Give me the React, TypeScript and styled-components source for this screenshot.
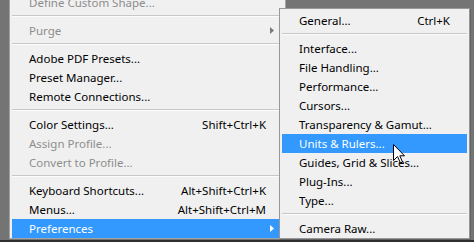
import React from 'react';
import styled, {createGlobalStyle} from 'styled-components';

const GlobalStyle = createGlobalStyle`
  html, body {
    margin: 0;
    padding: 0;
  }
  body {
    background: #727272;
    font-family: "Segoe UI", "Noto Sans", "Open Sans", sans-serif;
  }
`;

const Screen = styled.div`
  position: relative;
  width: 474px;
  height: 242px;
  overflow: hidden;
  background: #747474;
  display: flex;
  flex-direction: column;
`;

const Workspace = styled.div`
  flex: 1;
  display: flex;
  align-items: flex-start;
  padding-left: 9px;
  overflow: hidden;
`;

const Taskbar = styled.div`
  height: 2px;
  background: #2e2e2e;
`;

const Menu = styled.div`
  box-sizing: border-box;
  background: #f0f0f0;
  border: 1px solid #a3a3a3;
  padding: 0 2px;
  display: flex;
  flex-direction: column;
  font-size: 11.5px;
  color: #000;
`;

const MainMenu = styled(Menu)`
  width: 277px;
  margin-top: -7px;
  border-top: none;
`;

const SubMenu = styled(Menu)`
  position: absolute;
  left: 279px;
  top: 8px;
  width: 191px;
  padding-top: 2px;
  border-color: #979797;
  box-shadow: 1px 1px 0 rgba(0, 0, 0, 0.15);
`;

const ItemRow = styled.div<{disabled?: boolean; active?: boolean}>`
  display: flex;
  align-items: center;
  height: 19px;
  line-height: 19px;
  padding: 0 8px 0 17px;
  white-space: nowrap;
  color: ${p => (p.active ? '#fff' : p.disabled ? '#8d8d8d' : '#000')};
  background: ${p => (p.active ? '#3399ff' : 'transparent')};
`;

const Label = styled.span`
  flex: 1;
`;

const Shortcut = styled.span`
  margin-right: 4px;
`;

const ArrowSlot = styled.span<{active?: boolean; disabled?: boolean}>`
  width: 5px;
  height: 7px;
  display: flex;
  align-items: center;
  color: ${p => (p.active ? '#fff' : p.disabled ? '#7a7a7a' : '#3c3c3c')};
`;

const Separator = styled.div`
  margin: 3px 0 4px;
  border-top: 1px solid #c8c8c8;
  border-bottom: 1px solid #fcfcfc;
`;

const Cursor = styled.svg`
  position: absolute;
  left: 393px;
  top: 144px;
`;

type Entry =
  | {sep: true}
  | {
      label: string;
      shortcut?: string;
      disabled?: boolean;
      active?: boolean;
      submenu?: boolean;
    };

const Arrow = () => (
  <svg width="5" height="7" viewBox="0 0 5 7">
    <path d="M0 0 L4 3.5 L0 7 Z" fill="currentColor" />
  </svg>
);

const Item = (props: {
  label: string;
  shortcut?: string;
  disabled?: boolean;
  active?: boolean;
  submenu?: boolean;
}) => (
  <ItemRow disabled={props.disabled} active={props.active}>
    <Label>{props.label}</Label>
    {props.shortcut && <Shortcut>{props.shortcut}</Shortcut>}
    <ArrowSlot active={props.active} disabled={props.disabled}>
      {props.submenu && <Arrow />}
    </ArrowSlot>
  </ItemRow>
);

const renderEntries = (entries: Entry[]) =>
  entries.map((e, i) =>
    'sep' in e ? <Separator key={i} /> : <Item key={i} {...e} />
  );

const editMenu: Entry[] = [
  {label: 'Define Custom Shape...', disabled: true},
  {sep: true},
  {label: 'Purge', disabled: true, submenu: true},
  {sep: true},
  {label: 'Adobe PDF Presets...'},
  {label: 'Preset Manager...'},
  {label: 'Remote Connections...'},
  {sep: true},
  {label: 'Color Settings...', shortcut: 'Shift+Ctrl+K'},
  {label: 'Assign Profile...', disabled: true},
  {label: 'Convert to Profile...', disabled: true},
  {sep: true},
  {label: 'Keyboard Shortcuts...', shortcut: 'Alt+Shift+Ctrl+K'},
  {label: 'Menus...', shortcut: 'Alt+Shift+Ctrl+M'},
  {label: 'Preferences', active: true, submenu: true},
];

const prefsMenu: Entry[] = [
  {label: 'General...', shortcut: 'Ctrl+K'},
  {sep: true},
  {label: 'Interface...'},
  {label: 'File Handling...'},
  {label: 'Performance...'},
  {label: 'Cursors...'},
  {label: 'Transparency & Gamut...'},
  {label: 'Units & Rulers...', active: true},
  {label: 'Guides, Grid & Slices...'},
  {label: 'Plug-Ins...'},
  {label: 'Type...'},
  {sep: true},
  {label: 'Camera Raw...'},
];

export default function App() {
  return (
    <>
      <GlobalStyle />
      <Screen>
        <Workspace>
          <MainMenu>{renderEntries(editMenu)}</MainMenu>
        </Workspace>
        <Taskbar />
        <SubMenu>{renderEntries(prefsMenu)}</SubMenu>
        <Cursor width="13" height="20" viewBox="0 0 13 20">
          <path
            d="M0.5 0.5 L0.5 16.5 L4.5 12.5 L7.5 19 L9.5 18 L6.8 11.8 L11.5 11.8 Z"
            fill="#fff"
            stroke="#000"
            strokeWidth="1"
            strokeLinejoin="miter"
          />
        </Cursor>
      </Screen>
    </>
  );
}
